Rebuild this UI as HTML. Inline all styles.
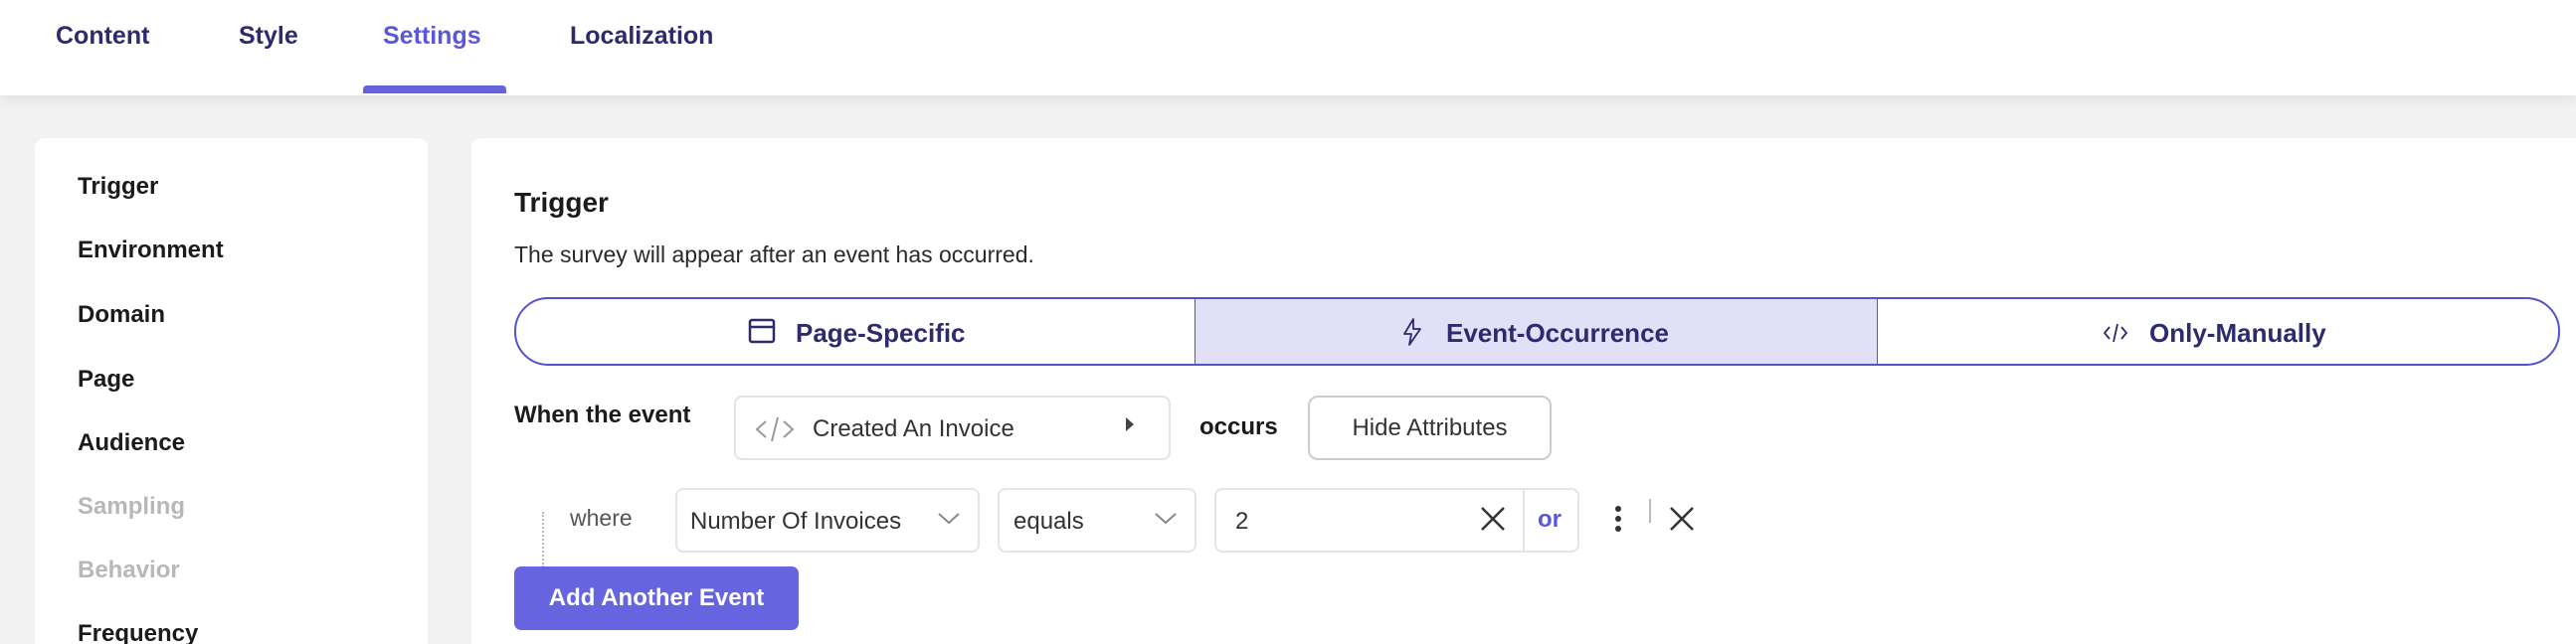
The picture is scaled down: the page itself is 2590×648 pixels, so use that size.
<!DOCTYPE html>
<html><head><style>
*{box-sizing:border-box;margin:0;padding:0}
html,body{width:2590px;height:648px;overflow:hidden}
body{background:#f2f2f3;font-family:"Liberation Sans",sans-serif;position:relative}
.a{position:absolute;white-space:nowrap}
.hdr{left:0;top:0;width:2590px;height:96px;background:#fff;box-shadow:0 4px 12px rgba(0,0,0,.08)}
.tab{top:22px;font-size:25px;font-weight:600;color:#2d2a6e}
.menu{font-size:24px;font-weight:600;color:#1b1b1b}
.sel{border:2px solid #e3e3ea;border-radius:8px;background:#fff}
.navy{color:#2d2a6e}
</style></head><body>
<div class="a hdr"></div>
<div class="a tab" style="left:56px">Content</div>
<div class="a tab" style="left:240px">Style</div>
<div class="a tab" style="left:385px;color:#5b57d9">Settings</div>
<div class="a tab" style="left:573px">Localization</div>
<div class="a" style="left:365px;top:86px;width:144px;height:8px;background:#6562dd;border-radius:4px 4px 0 0"></div>

<div class="a" style="left:35px;top:139px;width:395px;height:509px;background:#fff;border-radius:10px 10px 0 0"></div>
<div class="a menu" style="left:78px;top:174px">Trigger</div>
<div class="a menu" style="left:78px;top:238px">Environment</div>
<div class="a menu" style="left:78px;top:303px">Domain</div>
<div class="a menu" style="left:78px;top:368px">Page</div>
<div class="a menu" style="left:78px;top:432px">Audience</div>
<div class="a menu" style="left:78px;top:496px;color:#b8b8bc">Sampling</div>
<div class="a menu" style="left:78px;top:560px;color:#b8b8bc">Behavior</div>
<div class="a menu" style="left:78px;top:624px">Frequency</div>

<div class="a" style="left:474px;top:139px;width:2116px;height:509px;background:#fff;border-radius:10px 0 0 0"></div>
<div class="a" style="left:517px;top:188px;font-size:28px;font-weight:700;color:#1b1b1b">Trigger</div>
<div class="a" style="left:517px;top:243px;font-size:23px;color:#2a2a2a">The survey will appear after an event has occurred.</div>

<div class="a" style="left:517px;top:299px;width:2057px;height:69px;border:2px solid #5553c9;border-radius:34px;overflow:hidden;background:#fff">
  <div class="a" style="left:682px;top:0;width:687px;height:65px;background:#e1e0f7;border-left:1.5px solid #5553c9;border-right:1.5px solid #5553c9"></div>
</div>
<svg class="a" style="left:752px;top:319px" width="28" height="28" viewBox="0 0 28 28" fill="none" stroke="#2d2a6e" stroke-width="2.5"><rect x="2" y="3" width="24" height="22" rx="2"/><line x1="2" y1="10" x2="26" y2="10"/></svg>
<div class="a navy" style="left:800px;top:320px;font-size:26px;font-weight:600">Page-Specific</div>
<svg class="a" style="left:1408px;top:319px" width="24" height="30" viewBox="0 0 24 30" fill="none" stroke="#2d2a6e" stroke-width="1.8" stroke-linejoin="round"><path d="M13 2 L4 17 H11 L9 28 L20 12 H13 Z"/></svg>
<div class="a navy" style="left:1454px;top:320px;font-size:26px;font-weight:600">Event-Occurrence</div>
<svg class="a" style="left:2114px;top:323px" width="26" height="24" viewBox="0 0 26 24" fill="none" stroke="#2d2a6e" stroke-width="1.8"><path d="M7 6 L2 12 L7 18 M19 6 L24 12 L19 18 M15 3 L11 21"/></svg>
<div class="a navy" style="left:2161px;top:320px;font-size:26px;font-weight:600">Only-Manually</div>

<div class="a" style="left:517px;top:404px;font-size:24px;font-weight:600;color:#1b1b1b">When the event</div>
<div class="a sel" style="left:738px;top:398px;width:439px;height:65px"></div>
<svg class="a" style="left:758px;top:418px" width="42" height="28" viewBox="0 0 42 28" fill="none" stroke="#999" stroke-width="2"><path d="M12 6 L3 14 L12 22 M30 6 L39 14 L30 22 M24 2 L18 26"/></svg>
<div class="a" style="left:817px;top:418px;font-size:24px;color:#333">Created An Invoice</div>
<svg class="a" style="left:1130px;top:418px" width="12" height="18"><path d="M2 2 L10 9 L2 16Z" fill="#444"/></svg>
<div class="a" style="left:1206px;top:416px;font-size:24px;font-weight:600;color:#1b1b1b">occurs</div>
<div class="a" style="left:1315px;top:398px;width:245px;height:65px;border:2px solid #ccc;border-radius:10px;background:#fff;font-size:24px;color:#333;text-align:center;line-height:62px">Hide Attributes</div>

<div class="a" style="left:545px;top:515px;height:56px;border-left:2px dotted #bbb"></div>
<div class="a" style="left:573px;top:508px;font-size:23px;color:#555">where</div>
<div class="a sel" style="left:679px;top:491px;width:306px;height:65px"></div>
<div class="a" style="left:694px;top:511px;font-size:24px;color:#333">Number Of Invoices</div>
<svg class="a" style="left:942px;top:515px" width="24" height="14" fill="none" stroke="#888" stroke-width="2"><path d="M2 2 L12 11 L22 2"/></svg>
<div class="a sel" style="left:1003px;top:491px;width:200px;height:65px"></div>
<div class="a" style="left:1019px;top:511px;font-size:24px;color:#333">equals</div>
<svg class="a" style="left:1160px;top:515px" width="24" height="14" fill="none" stroke="#888" stroke-width="2"><path d="M2 2 L12 11 L22 2"/></svg>
<div class="a sel" style="left:1221px;top:491px;width:367px;height:65px"></div>
<div class="a" style="left:1531px;top:493px;width:2px;height:61px;background:#e3e3ea"></div>
<div class="a" style="left:1242px;top:511px;font-size:24px;color:#333">2</div>
<svg class="a" style="left:1488px;top:509px" width="26" height="26" stroke="#333" stroke-width="2.5"><path d="M2 2 L24 24 M24 2 L2 24"/></svg>
<div class="a" style="left:1546px;top:509px;font-size:24px;color:#5b57d9;font-weight:600">or</div>
<svg class="a" style="left:1622px;top:508px" width="10" height="28"><circle cx="5" cy="4" r="3" fill="#333"/><circle cx="5" cy="14" r="3" fill="#333"/><circle cx="5" cy="24" r="3" fill="#333"/></svg>
<div class="a" style="left:1658px;top:502px;width:1.5px;height:24px;background:#bbb"></div>
<svg class="a" style="left:1678px;top:509px" width="26" height="26" stroke="#333" stroke-width="2.5"><path d="M2 2 L24 24 M24 2 L2 24"/></svg>

<div class="a" style="left:517px;top:570px;width:286px;height:64px;background:#6764e0;border-radius:7px;color:#fff;font-size:24px;font-weight:600;text-align:center;line-height:64px">Add Another Event</div>
</body></html>
